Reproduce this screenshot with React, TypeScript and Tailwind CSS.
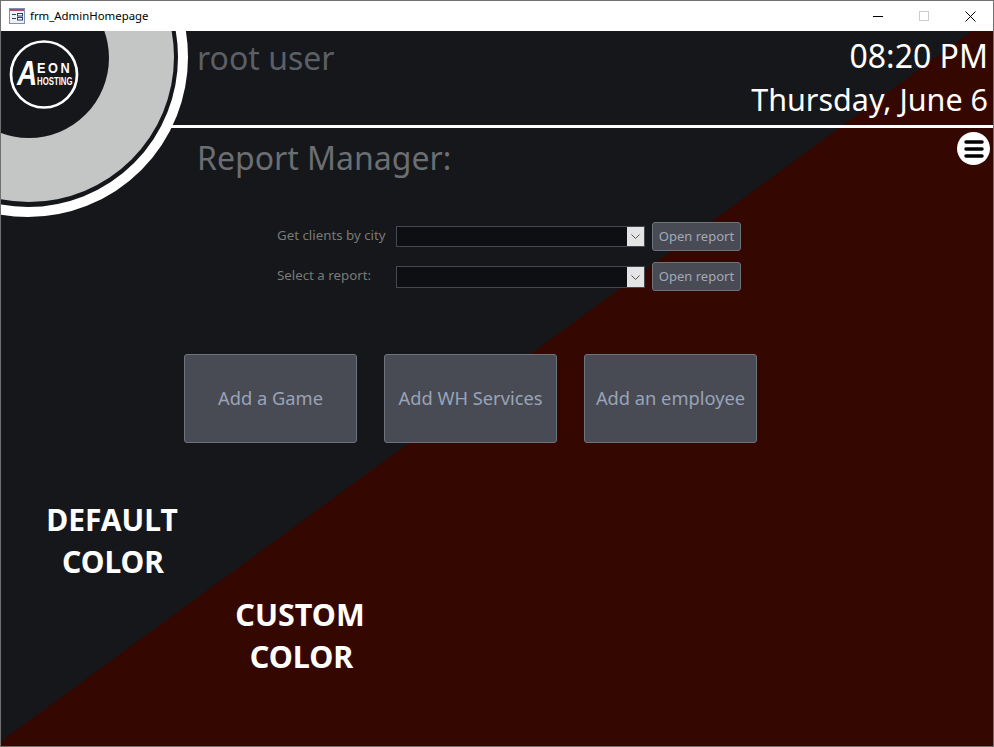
import React from 'react';
import { Menu } from 'lucide-react';

const FONT = "font-['Noto_Sans','Open_Sans',sans-serif]";

function FormIcon() {
    return (
        <svg width="16" height="16" viewBox="0 0 16 16" className="shrink-0">
            <rect x="0.5" y="0.5" width="15" height="15" fill="#eef1f8" stroke="#7c8fb5" />
            <rect x="1" y="1" width="14" height="2" fill="#b5476b" />
            <path d="M3 6.5h4M3 10.5h4" stroke="#2a3f6e" strokeWidth="1" />
            <rect x="8.5" y="5.5" width="5" height="2.5" fill="#fff" stroke="#2a3f6e" />
            <rect x="8.5" y="9.5" width="5" height="2.5" fill="#fff" stroke="#2a3f6e" />
        </svg>
    );
}

function TitleBar() {
    return (
        <header className="h-[30px] bg-white flex items-center pl-[8px] shrink-0">
            <FormIcon />
            <span className="ml-[5px] text-[11.4px] text-black leading-none">frm_AdminHomepage</span>
            <div className="ml-auto flex items-center">
                {/* Minimize */}
                <div className="w-[46px] h-[30px] flex items-center justify-center">
                    <span className="w-[10px] h-px bg-black"></span>
                </div>
                {/* Maximize (disabled) */}
                <div className="w-[46px] h-[30px] flex items-center justify-center">
                    <span className="w-[10px] h-[10px] border border-[#cccccc]"></span>
                </div>
                {/* Close */}
                <div className="w-[46px] h-[30px] flex items-center justify-center">
                    <svg width="11" height="11" viewBox="0 0 11 11">
                        <path d="M0.5 0.5l10 10M10.5 0.5l-10 10" stroke="#000" strokeWidth="1" />
                    </svg>
                </div>
            </div>
        </header>
    );
}

function Disc() {
    return (
        <svg className="absolute left-0 top-0" width="200" height="200" viewBox="0 0 200 200">
            <circle cx="27" cy="26" r="155" fill="#15171a" stroke="#ffffff" strokeWidth="10" />
            <circle cx="28" cy="26" r="145" fill="#c4c6c5" />
            <circle cx="28" cy="27" r="80" fill="#15171a" />
            <circle cx="43" cy="43.5" r="33" fill="#15171a" stroke="#ffffff" strokeWidth="2.7" />
        </svg>
    );
}

function Logo() {
    return (
        <div className="absolute left-[16px] top-[29px] flex text-white font-['Liberation_Sans',sans-serif] font-bold">
            <span className="w-[19px] text-[35px] leading-[25px] italic origin-left scale-x-[0.8]">A</span>
            <div className="ml-px w-[36px] flex flex-col">
                <span className="mt-[2px] text-[15px] leading-[11px] tracking-[3px] origin-left scale-x-[0.85]">EON</span>
                <span className="mt-[5px] text-[10px] leading-[7px] whitespace-nowrap origin-left scale-x-[0.78]">HOSTING</span>
            </div>
        </div>
    );
}

function ReportRow({ label, comboHeight }: { label: string; comboHeight: string }) {
    return (
        <div className="flex items-center h-[29px]">
            <span className="w-[119px] text-[13.3px] text-[#7a7b78] leading-none pb-[1px] whitespace-nowrap">{label}</span>
            <div className={`w-[249px] self-start mt-[4px] border border-[#45484f] bg-[#0e0f12] flex justify-end ${comboHeight}`}>
                <div className="w-[17px] h-full bg-[#e4e4e4] flex items-center justify-center">
                    <svg width="9" height="5" viewBox="0 0 9 5">
                        <path d="M0.5 0.5l4 4 4-4" fill="none" stroke="#555" strokeWidth="1" />
                    </svg>
                </div>
            </div>
            <button className="ml-[7px] w-[89px] h-[29px] rounded-[3px] border border-[#6e727c] bg-[#484b53] text-[13px] text-[#a3a9b8] leading-none">
                Open report
            </button>
        </div>
    );
}

function ActionButton({ label }: { label: string }) {
    return (
        <button className="w-[173px] h-[89px] rounded-[3px] border border-[#6e727c] bg-[#484b53] text-[18.3px] text-[#9aa3b8] leading-none">
            {label}
        </button>
    );
}

export default function App() {
    return (
        <div className={`w-[994px] h-[747px] border border-[#707070] flex flex-col overflow-hidden ${FONT}`}>
            <TitleBar />

            <main className="relative flex-1 bg-[#15171a] overflow-hidden">
                {/* Custom colour half */}
                <svg className="absolute inset-0" width="992" height="716" viewBox="0 0 992 716">
                    <polygon points="971,0 992,0 992,716 -1,716 -1,711" fill="#340800" />
                </svg>

                <div className="relative">
                    {/* Header */}
                    <div className="flex justify-between h-[94px] pl-[196px] pr-[5px]">
                        <h1 className="text-[32px] leading-none pt-[11px] text-[#5b5f66]">root user</h1>
                        <div className="text-right text-white leading-none pt-[9px]">
                            <div className="text-[32px]">08:20 PM</div>
                            <div className="mt-[12px] text-[30.5px]">Thursday, June 6</div>
                        </div>
                    </div>
                    <div className="h-[3px] bg-white"></div>

                    <h2 className="pl-[196px] pt-[14px] text-[32px] leading-none text-[#6b6e72]">Report Manager:</h2>

                    {/* Reports */}
                    <div className="pl-[276px] mt-[48px] flex flex-col gap-[11px]">
                        <ReportRow label="Get clients by city" comboHeight="h-[21px]" />
                        <ReportRow label="Select a report:" comboHeight="h-[22px]" />
                    </div>

                    {/* Forms */}
                    <div className="pl-[183px] mt-[63px] flex gap-[27px]">
                        <ActionButton label="Add a Game" />
                        <ActionButton label="Add WH Services" />
                        <ActionButton label="Add an employee" />
                    </div>

                    {/* Colour notes */}
                    <div className="mt-[56px] w-[222px] text-center text-white text-[30px] leading-[42px] font-bold">
                        DEFAULT<br /><span className="pl-[2px]">COLOR</span>
                    </div>
                    <div className="ml-[188px] mt-[10px] w-[222px] text-center text-white text-[30.5px] leading-[42px] font-bold">
                        CUSTOM<br /><span className="pl-[3px]">COLOR</span>
                    </div>
                </div>

                <Disc />
                <Logo />

                {/* Menu button */}
                <button className="absolute right-[3px] top-[101px] w-[33px] h-[33px] rounded-full bg-white flex items-center justify-center">
                    <Menu size={24} strokeWidth={3.5} color="#000" />
                </button>
            </main>
        </div>
    );
}
